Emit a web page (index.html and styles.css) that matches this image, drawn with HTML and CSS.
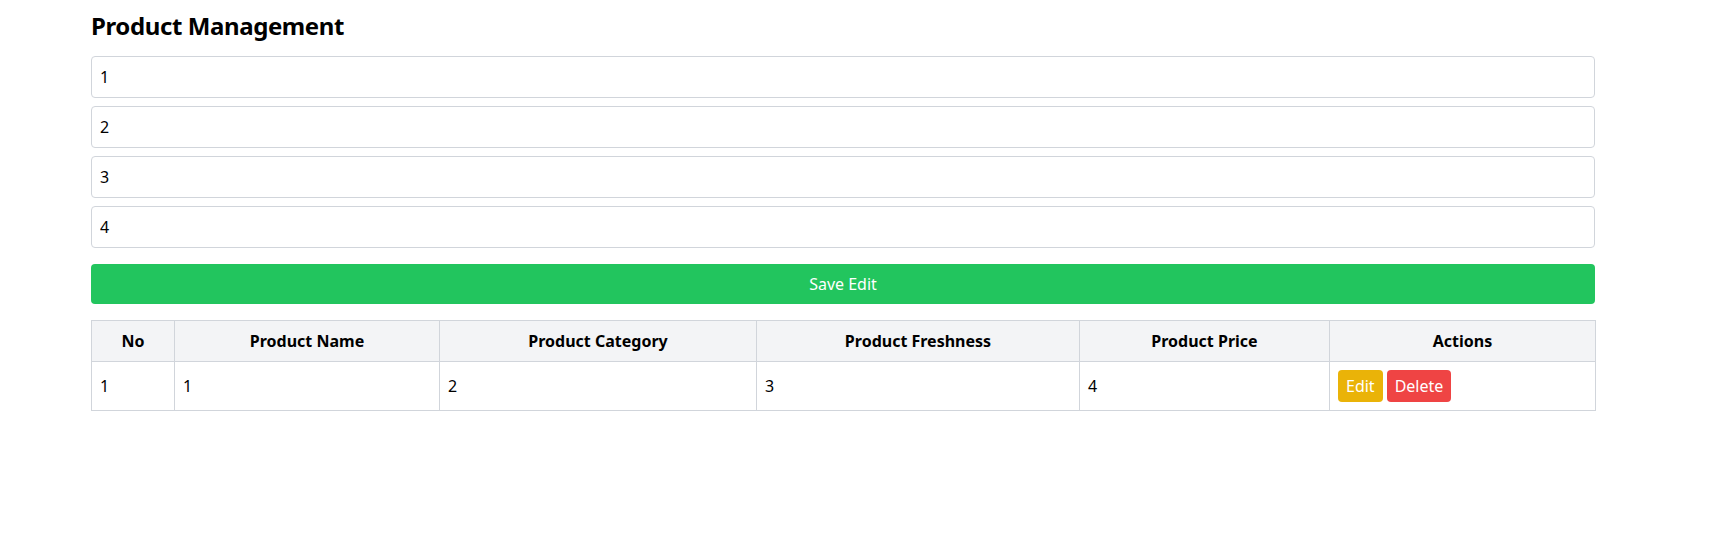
FILE: index.html
```html
<!DOCTYPE html>
<html lang="en">
<head>
<meta charset="utf-8">
<title>Product Management</title>
<link rel="stylesheet" href="styles.css">
</head>
<body>
<main class="page">
  <h1 class="title">Product Management</h1>
  <form class="form">
    <input class="field" type="text" value="1">
    <input class="field" type="text" value="2">
    <input class="field" type="text" value="3">
    <input class="field" type="text" value="4">
    <button class="save" type="button">Save Edit</button>
  </form>
  <table class="table">
    <colgroup>
      <col class="c-no">
      <col class="c-name">
      <col class="c-cat">
      <col class="c-fresh">
      <col class="c-price">
      <col class="c-act">
    </colgroup>
    <thead>
      <tr>
        <th>No</th>
        <th>Product Name</th>
        <th>Product Category</th>
        <th>Product Freshness</th>
        <th>Product Price</th>
        <th>Actions</th>
      </tr>
    </thead>
    <tbody>
      <tr>
        <td>1</td>
        <td>1</td>
        <td>2</td>
        <td>3</td>
        <td>4</td>
        <td>
          <div class="actions">
            <button class="btn btn-edit" type="button">Edit</button>
            <button class="btn btn-delete" type="button">Delete</button>
          </div>
        </td>
      </tr>
    </tbody>
  </table>
</main>
</body>
</html>
```
FILE: styles.css
```css
* {
  box-sizing: border-box;
}

html, body {
  margin: 0;
  padding: 0;
  background: #ffffff;
}

body {
  font-family: "Noto Sans", "Open Sans", sans-serif;
  font-size: 16px;
  line-height: 24px;
  color: #000000;
}

.page {
  width: 1504px;
  margin-left: 91px;
  padding-top: 10px;
}

.title {
  margin: 0 0 14px;
  font-size: 24px;
  line-height: 32px;
  font-weight: 700;
  letter-spacing: -0.4px;
}

.form {
  display: flex;
  flex-direction: column;
  gap: 8px;
  margin: 0 0 16px;
}

.field {
  display: block;
  width: 100%;
  height: 42px;
  padding: 8px;
  border: 1px solid #d1d5db;
  border-radius: 4px;
  font-family: inherit;
  font-size: 16px;
  line-height: 24px;
  color: #000000;
  background: #ffffff;
  outline: none;
}

.save {
  display: block;
  width: 100%;
  height: 40px;
  margin-top: 8px;
  padding: 8px;
  border: none;
  border-radius: 4px;
  background: #22c55e;
  color: #ffffff;
  font-family: inherit;
  font-size: 16px;
  line-height: 24px;
}

.table {
  width: 1504px;
  table-layout: fixed;
  border-collapse: collapse;
}

.c-no { width: 83px; }
.c-name { width: 265px; }
.c-cat { width: 317px; }
.c-fresh { width: 323px; }
.c-price { width: 250px; }
.c-act { width: 266px; }

.table th,
.table td {
  border: 1px solid #d1d5db;
  padding: 8px;
  font-size: 16px;
  line-height: 24px;
}

.table th {
  background: #f3f4f6;
  font-weight: 700;
  text-align: center;
}

.table td {
  text-align: left;
}

.actions {
  display: flex;
  gap: 4px;
}

.btn {
  padding: 4px 8px;
  border: none;
  border-radius: 4px;
  color: #ffffff;
  font-family: inherit;
  font-size: 16px;
  line-height: 24px;
}

.btn-edit {
  background: #eab308;
}

.btn-delete {
  background: #ef4444;
}
```
